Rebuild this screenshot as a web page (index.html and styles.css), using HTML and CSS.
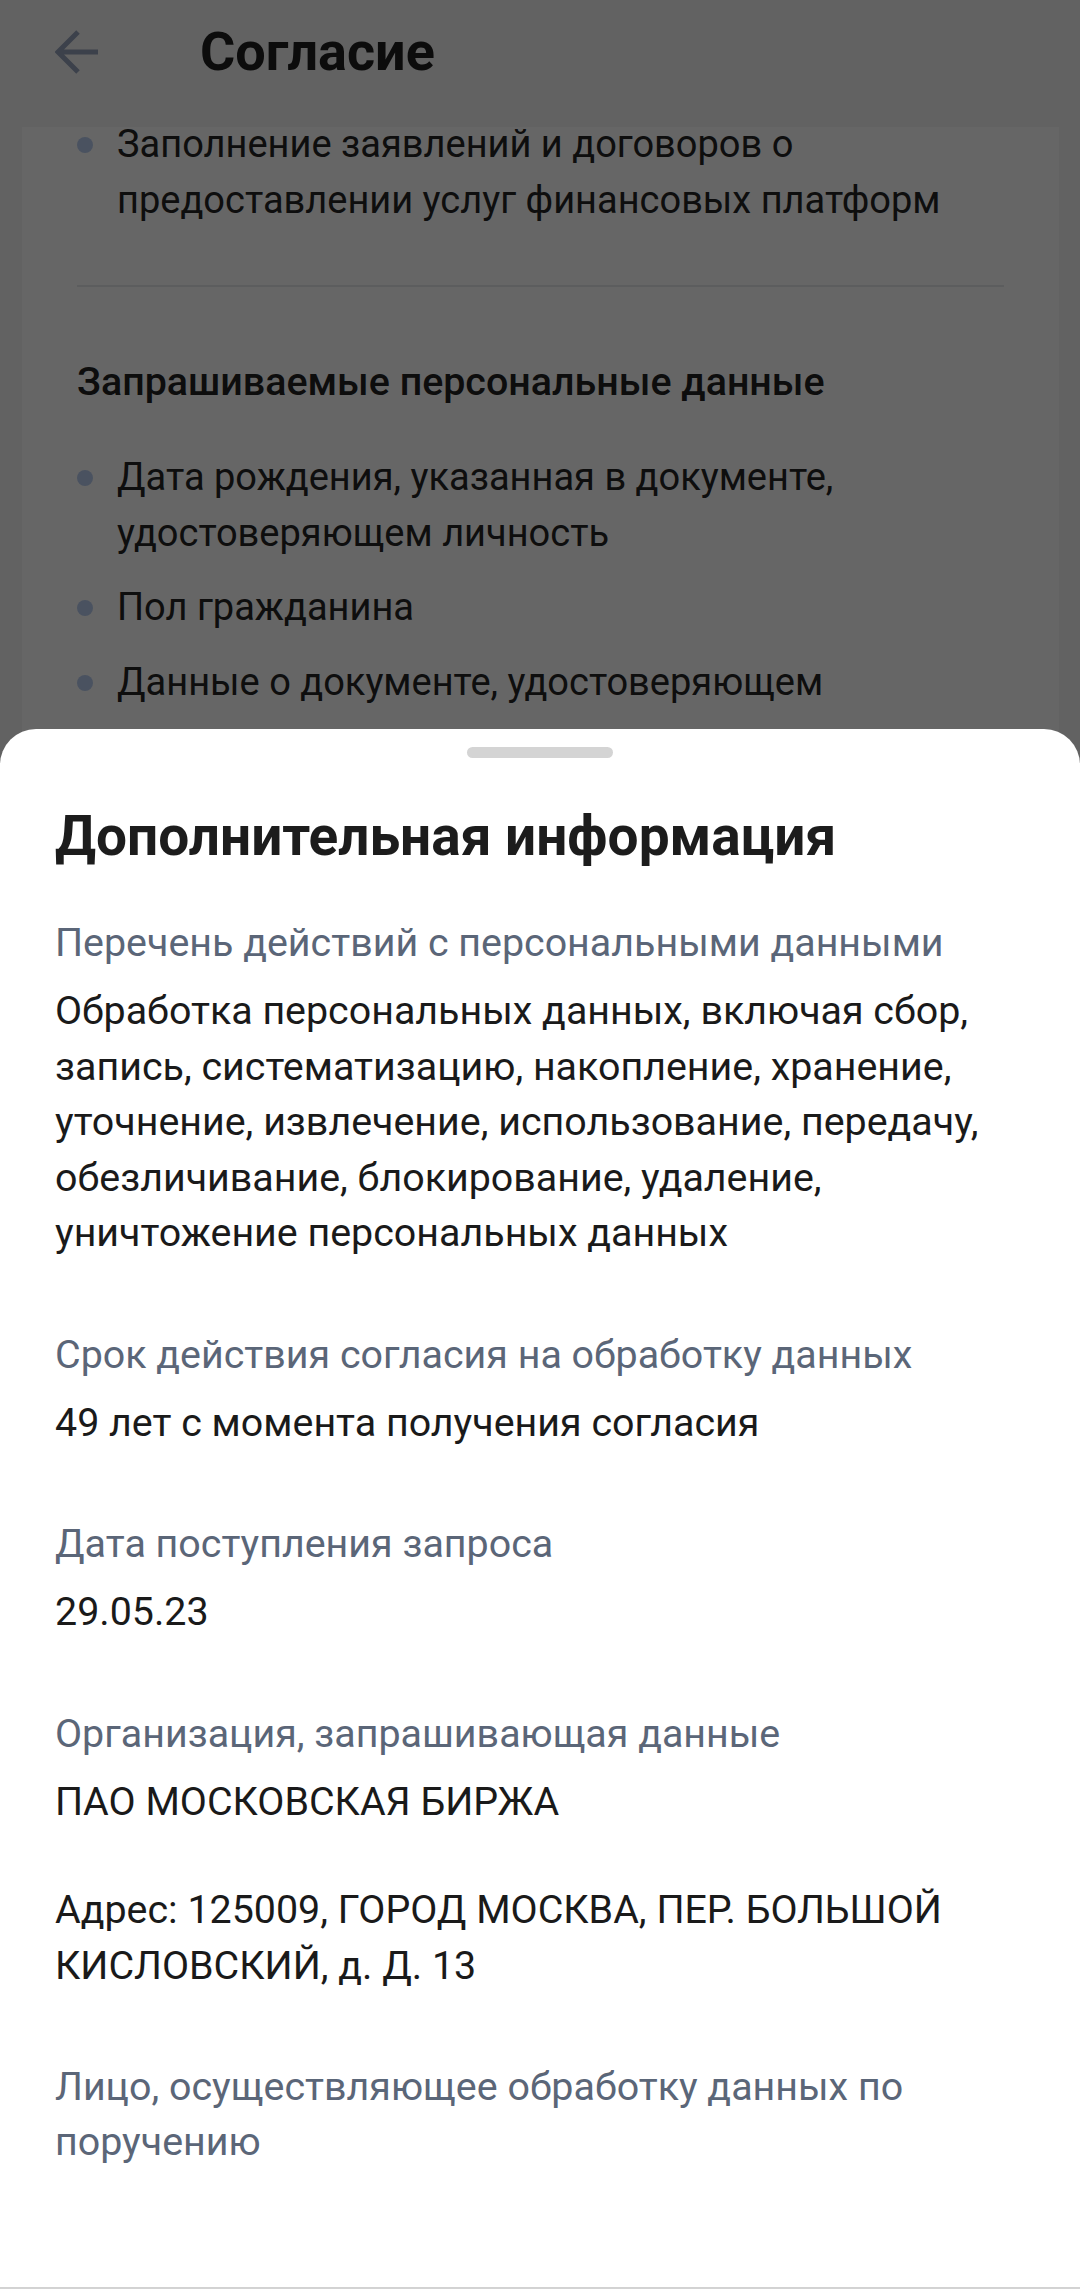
FILE: index.html
```html
<!DOCTYPE html>
<html lang="ru">
<head>
    <meta charset="UTF-8">
    <meta name="viewport" content="width=device-width, initial-scale=1.0">
    <title>Согласие</title>
    <link rel="stylesheet" href="styles.css">
</head>
<body>

<div class="screen">
    <!-- Верхняя панель -->
    <header class="appbar">
        <button class="back" aria-label="Назад">
            <svg width="44" height="44" viewBox="0 0 44 44">
                <path d="M43 22H3 M23 2L3 22l20 20" fill="none" stroke="currentColor" stroke-width="5"/>
            </svg>
        </button>
        <h1>Согласие</h1>
    </header>

    <!-- Карточка согласия (прокручена) -->
    <main class="content">
        <section class="card">
            <ul class="bullets">
                <li>Заполнение заявлений и договоров о предоставлении услуг финансовых платформ</li>
            </ul>
            <hr class="divider">
            <h3 class="card-title">Запрашиваемые персональные данные</h3>
            <ul class="bullets">
                <li>Дата рождения, указанная в документе, удостоверяющем личность</li>
                <li>Пол гражданина</li>
                <li>Данные о документе, удостоверяющем</li>
            </ul>
        </section>
    </main>
</div>

<div class="scrim"></div>

<!-- Нижняя шторка -->
<div class="sheet">
    <div class="handle"></div>
    <h2>Дополнительная информация</h2>

    <div class="info">
        <div class="info-label">Перечень действий с персональными данными</div>
        <div class="info-value">Обработка персональных данных, включая сбор, запись, систематизацию, накопление, хранение, уточнение, извлечение, использование, передачу, обезличивание, блокирование, удаление, уничтожение персональных данных</div>
    </div>

    <div class="info">
        <div class="info-label">Срок действия согласия на обработку данных</div>
        <div class="info-value">49 лет с момента получения согласия</div>
    </div>

    <div class="info">
        <div class="info-label">Дата поступления запроса</div>
        <div class="info-value">29.05.23</div>
    </div>

    <div class="info">
        <div class="info-label">Организация, запрашивающая данные</div>
        <div class="info-value">ПАО МОСКОВСКАЯ БИРЖА</div>
        <div class="info-value address">Адрес: 125009, ГОРОД МОСКВА, ПЕР. БОЛЬШОЙ КИСЛОВСКИЙ, д. Д. 13</div>
    </div>

    <div class="info">
        <div class="info-label">Лицо, осуществляющее обработку данных по поручению</div>
    </div>
</div>

</body>
</html>
```

FILE: styles.css
```css
html, body {
    margin: 0;
    padding: 0;
}
body {
    width: 1080px;
    height: 2289px;
    overflow: hidden;
    font-family: Roboto, "Noto Sans", Arial, sans-serif;
    background-color: #f5f5f5;
    color: #1f1f1f;
}
.screen {
    height: 100%;
    display: flex;
    flex-direction: column;
}
.appbar {
    position: relative;
    z-index: 1;
    height: 127px;
    flex-shrink: 0;
    display: flex;
    align-items: center;
    padding: 0 0 24px 55px;
    gap: 101px;
    box-sizing: border-box;
    background-color: #f5f5f5;
}
.back {
    width: 44px;
    height: 44px;
    padding: 0;
    border: none;
    background: none;
    color: #96a2bb;
    display: flex;
}
.appbar h1 {
    margin: 0;
    font-size: 54px;
    font-weight: 700;
    color: #202020;
    line-height: 1;
}
.content {
    flex: 1;
}
.card {
    margin: 0 21px 0 22px;
    background-color: #fff;
    padding: 0 55px;
    height: 1200px;
}
.bullets {
    list-style: none;
    margin: 0;
    padding: 0;
    display: flex;
    flex-direction: column;
    gap: 19px;
}
.bullets:first-child {
    margin-top: -10px;
}
.bullets li {
    position: relative;
    padding: 0 20px 0 40px;
    font-size: 38px;
    line-height: 55.5px;
    color: #242424;
}
.bullets li::before {
    content: "";
    position: absolute;
    left: 0;
    top: 20px;
    width: 16px;
    height: 16px;
    border-radius: 50%;
    background-color: #b9cdf0;
}
.divider {
    border: none;
    border-top: 2px solid #e6e8ec;
    margin: 57px 0 0;
}
.card-title {
    margin: 67px 0 41px;
    font-size: 39.4px;
    font-weight: 500;
    line-height: 55px;
    color: #222;
}
.scrim {
    position: fixed;
    inset: 0;
    z-index: 2;
    background-color: rgba(0, 0, 0, 0.6);
}
.sheet {
    position: fixed;
    z-index: 3;
    left: 0;
    right: 0;
    bottom: 0;
    top: 729px;
    background-color: #fff;
    border-radius: 36px 36px 0 0;
    padding: 18px 40px 0 55px;
    box-sizing: border-box;
    border-bottom: 2px solid #d3d3d3;
    display: flex;
    flex-direction: column;
    gap: 66px;
}
.handle {
    width: 146px;
    height: 11px;
    border-radius: 6px;
    background-color: #d4d4d4;
    align-self: center;
    margin: 0 0 -23px -15px;
}
.sheet h2 {
    margin: 0 0 -22px;
    font-size: 55px;
    font-weight: 700;
    line-height: 70px;
    color: #1c1c1c;
}
.info-label {
    font-size: 39.4px;
    line-height: 55px;
    color: #5b6678;
    margin-bottom: 13px;
}
.info-value {
    font-size: 39.4px;
    line-height: 55.5px;
    color: #1a1a1a;
}
.info-value.address {
    margin-top: 53px;
}
```
